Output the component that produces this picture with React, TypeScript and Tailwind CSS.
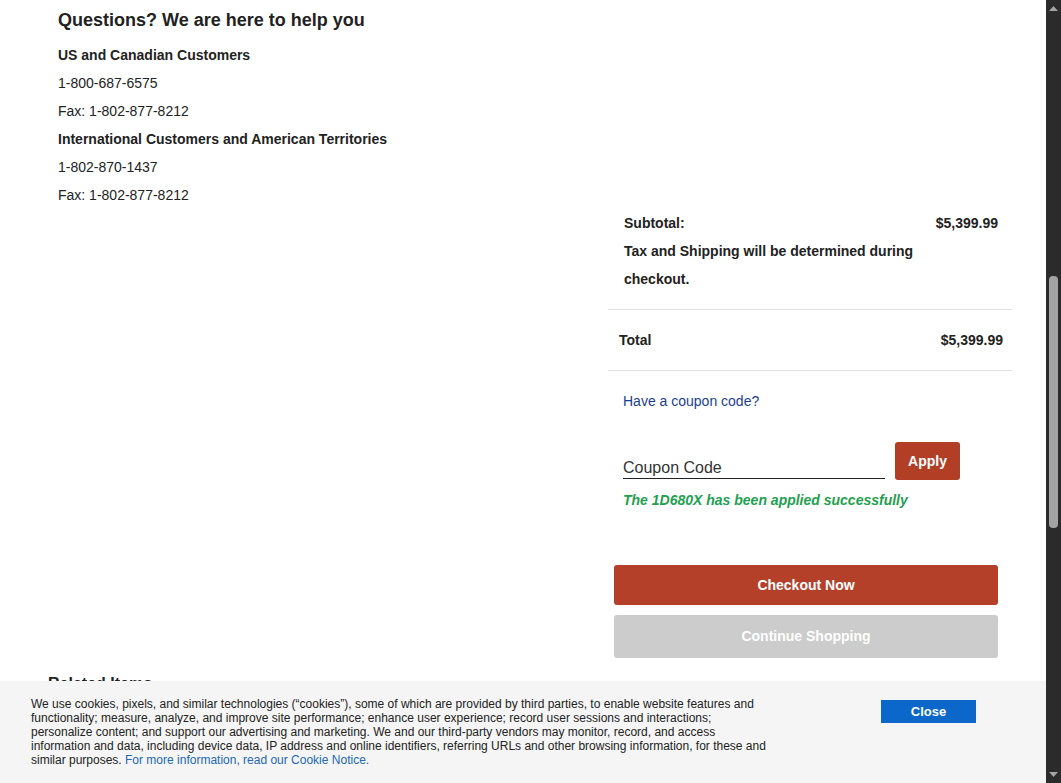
import React from "react";

const font = { fontFamily: '"Liberation Sans", Arial, sans-serif' };

function HelpBlock() {
  return (
    <div className="pl-[58px] pt-[6px] text-[#222]">
      <h2 className="text-[18px] font-bold leading-[28px] mb-[7px]">Questions? We are here to help you</h2>
      <p className="text-[14px] leading-[28px] font-bold">US and Canadian Customers</p>
      <p className="text-[14px] leading-[28px]">1-800-687-6575</p>
      <p className="text-[14px] leading-[28px]">Fax: 1-802-877-8212</p>
      <p className="text-[14px] leading-[28px] font-bold">International Customers and American Territories</p>
      <p className="text-[14px] leading-[28px]">1-802-870-1437</p>
      <p className="text-[14px] leading-[28px]">Fax: 1-802-877-8212</p>
    </div>
  );
}

function OrderSummary() {
  return (
    <div className="ml-[608px] w-[404px] text-[#222]">
      <div className="pl-[16px] pr-[14px] pb-[16px] text-[14px] font-bold leading-[28px]">
        <div className="flex justify-between">
          <span>Subtotal:</span>
          <span>$5,399.99</span>
        </div>
        <p className="w-[300px]">Tax and Shipping will be determined during checkout.</p>
      </div>
      <div className="border-t border-[#e3e3e3]" />
      <div className="flex items-center justify-between h-[60px] pl-[11px] pr-[9px] text-[14px] font-bold">
        <span>Total</span>
        <span>$5,399.99</span>
      </div>
      <div className="border-t border-[#e3e3e3]" />

      <div className="pl-[15px] pt-[16px]">
        <a className="block text-[14px] leading-[28px] text-[#1a3f8f]">Have a coupon code?</a>
        <div className="flex items-end gap-[10px] mt-[27px]">
          <div className="w-[262px] border-b border-[#222] text-[16px] leading-[20px] text-[#333]">Coupon Code</div>
          <button className="w-[65px] h-[38px] rounded-[3px] bg-[#b33e26] text-white text-[14px] font-bold mb-[-1px]">Apply</button>
        </div>
        <p className="mt-[11px] text-[14px] leading-[20px] font-bold italic text-[#22a04f]">
          The 1D680X has been applied successfully
        </p>
      </div>

      <div className="pl-[6px] pr-[14px] mt-[55px] flex flex-col gap-[10px]">
        <button className="h-[40px] rounded-[3px] bg-[#b5402a] text-white text-[14px] font-bold">Checkout Now</button>
        <button className="h-[43px] rounded-[3px] bg-[#cccccc] text-white text-[14px] font-bold">Continue Shopping</button>
      </div>
    </div>
  );
}

function CookieBanner() {
  return (
    <div className="absolute left-0 bottom-0 w-[1046px] h-[102px] bg-[#f5f5f5] flex">
      <p className="ml-[31px] mt-[16px] w-[745px] text-[12px] leading-[14px] text-[#222]">
        We use cookies, pixels, and similar technologies (“cookies”), some of which are provided by third parties, to enable website features and
        functionality; measure, analyze, and improve site performance; enhance user experience; record user sessions and interactions;
        personalize content; and support our advertising and marketing. We and our third-party vendors may monitor, record, and access
        information and data, including device data, IP address and online identifiers, referring URLs and other browsing information, for these and
        similar purposes. <a className="text-[#2268b5]">For more information, read our Cookie Notice.</a>
      </p>
      <button className="ml-[105px] mt-[19px] w-[95px] h-[23px] bg-[#0b67c9] text-white text-[13px] font-bold">Close</button>
    </div>
  );
}

function Scrollbar() {
  return (
    <div className="w-[15px] h-full bg-[#2b2b2b] flex flex-col items-center">
      <div className="h-[17px] flex items-center justify-center">
        <svg width="9" height="5" viewBox="0 0 9 5"><path d="M0 5 L4.5 0 L9 5 Z" fill="#a3a3a3" /></svg>
      </div>
      <div className="mt-[259px] w-[9px] h-[252px] rounded-[4px] bg-[#a3a3a3]" />
      <div className="flex-1" />
      <div className="h-[17px] flex items-center justify-center">
        <svg width="9" height="5" viewBox="0 0 9 5"><path d="M0 0 L4.5 5 L9 0 Z" fill="#a3a3a3" /></svg>
      </div>
    </div>
  );
}

export default function App() {
  return (
    <div className="relative w-[1061px] h-[783px] overflow-hidden bg-white flex" style={font}>
      <div className="w-[1046px]">
        <HelpBlock />
        <OrderSummary />
        <h3 className="pl-[48px] mt-[15px] text-[16px] leading-[22px] font-bold text-[#222]">Related Items</h3>
      </div>
      <Scrollbar />
      <CookieBanner />
    </div>
  );
}
